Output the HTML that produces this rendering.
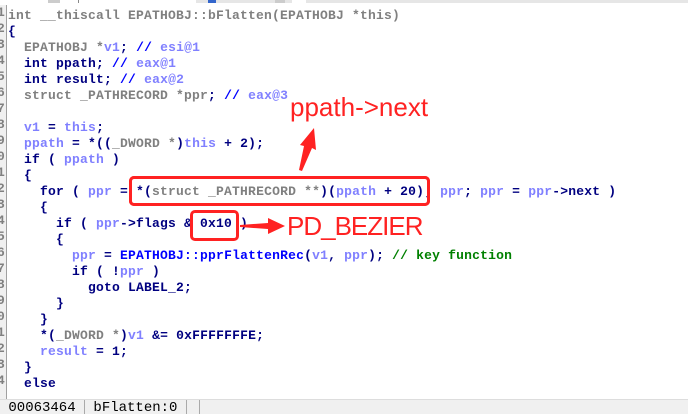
<!DOCTYPE html>
<html><head><meta charset="utf-8"><style>
html,body{margin:0;padding:0;width:688px;height:414px;overflow:hidden;background:#fff;position:relative}
.top{position:absolute;left:0;top:0;width:688px;height:5px;background:#fff}
.top i{position:absolute;top:0;height:3px;background:#ccc}
.gut{position:absolute;left:0;top:5px;width:6px;height:394px;background:#f0f0f0;border-right:1px solid #a0a0a0;overflow:hidden}
.gut div{font:bold 13px/16px "Liberation Mono",monospace;color:#808080;height:16px;margin-left:-3px}
.code{position:absolute;left:8px;top:8px;font:bold 13px/16px "Liberation Mono",monospace;letter-spacing:0.2px;color:#000080;white-space:pre}
.v{color:#8080ff}.g{color:#808080}.c{color:#0000ff}.f{color:#0000ff}.gr{color:#008000}
.status{position:absolute;left:0;top:399px;width:688px;height:15px;background:#f0f0f0;border-top:1px solid #ddd;font:14px/17px "Liberation Mono",monospace;color:#000;white-space:pre;overflow:hidden}
.box{position:absolute;border:3px solid #f22;border-radius:5px}
.ann{position:absolute;color:#f22;font:26px/28px "Liberation Sans",sans-serif;white-space:pre}
</style></head><body>
<div class="top"><i style="left:48px;width:12px"></i><i style="left:78px;width:1px;background:#888"></i><i style="left:196px;width:96px;background:#e6e6e6"></i><i style="left:208px;width:8px;background:#36c"></i><i style="left:275px;width:10px"></i><i style="left:306px;width:382px;background:#e6e6e6"></i></div>
<div class="gut"><div>1</div><div>2</div><div>3</div><div>4</div><div>5</div><div>6</div><div>7</div><div>8</div><div>9</div><div>0</div><div>1</div><div>2</div><div>3</div><div>4</div><div>5</div><div>6</div><div>7</div><div>8</div><div>9</div><div>0</div><div>1</div><div>2</div><div>3</div><div>4</div></div>
<div class="code"><span class="g">int __thiscall EPATHOBJ::bFlatten(EPATHOBJ *this)</span>
{
  <span class="g">EPATHOBJ *</span><span class="v">v1</span>; <span class="c">//</span> <span class="v">esi@1</span>
  int ppath; <span class="c">//</span> <span class="v">eax@1</span>
  int result; <span class="c">//</span> <span class="v">eax@2</span>
  <span class="g">struct _PATHRECORD *ppr</span>; <span class="c">//</span> <span class="v">eax@3</span>

  <span class="v">v1</span> = <span class="v">this</span>;
  <span class="v">ppath</span> = *((<span class="g">_DWORD *</span>)<span class="v">this</span> + 2);
  if ( <span class="v">ppath</span> )
  {
    for ( <span class="v">ppr</span> = *(<span class="g">struct _PATHRECORD **</span>)(<span class="v">ppath</span> + 20); <span class="v">ppr</span>; <span class="v">ppr</span> = <span class="v">ppr</span>-&gt;next )
    {
      if ( <span class="v">ppr</span>-&gt;flags &amp; 0x10 )
      {
        <span class="v">ppr</span> = <span class="f">EPATHOBJ::pprFlattenRec</span>(<span class="v">v1</span>, <span class="v">ppr</span>); <span class="gr">// key function</span>
        if ( !<span class="v">ppr</span> )
          goto LABEL_2;
      }
    }
    *(<span class="g">_DWORD *</span>)<span class="v">v1</span> &amp;= 0xFFFFFFFE;
    <span class="v">result</span> = 1;
  }
  else</div>
<div class="box" style="left:129px;top:176px;width:295px;height:24px;background:transparent"></div>
<div style="position:absolute;left:424px;top:182px;width:6px;height:14px;background:#fff"></div>
<div class="box" style="left:129px;top:176px;width:295px;height:24px"></div>
<div class="box" style="left:190px;top:210px;width:43px;height:25px"></div>
<div class="ann" style="left:290px;top:93px">ppath-&gt;next</div>
<div class="ann" style="left:287px;top:212px;letter-spacing:-1px">PD_BEZIER</div>
<svg style="position:absolute;left:0;top:0" width="688" height="414">
<polygon points="299,170 304,146 300,145 314,128 316,150 312,148 302,171" fill="#f22"/>
<polygon points="240,225 268,223 268,218 285,226 268,234 268,229 240,227" fill="#f22"/>
</svg>
<div class="status"> 00063464 <span style="border-left:1px solid #aaa"> bFlatten:0 </span><span style="border-left:1px solid #aaa;display:inline-block;width:12px">&nbsp;</span><span style="border-left:1px solid #aaa"> </span></div>
</body></html>
